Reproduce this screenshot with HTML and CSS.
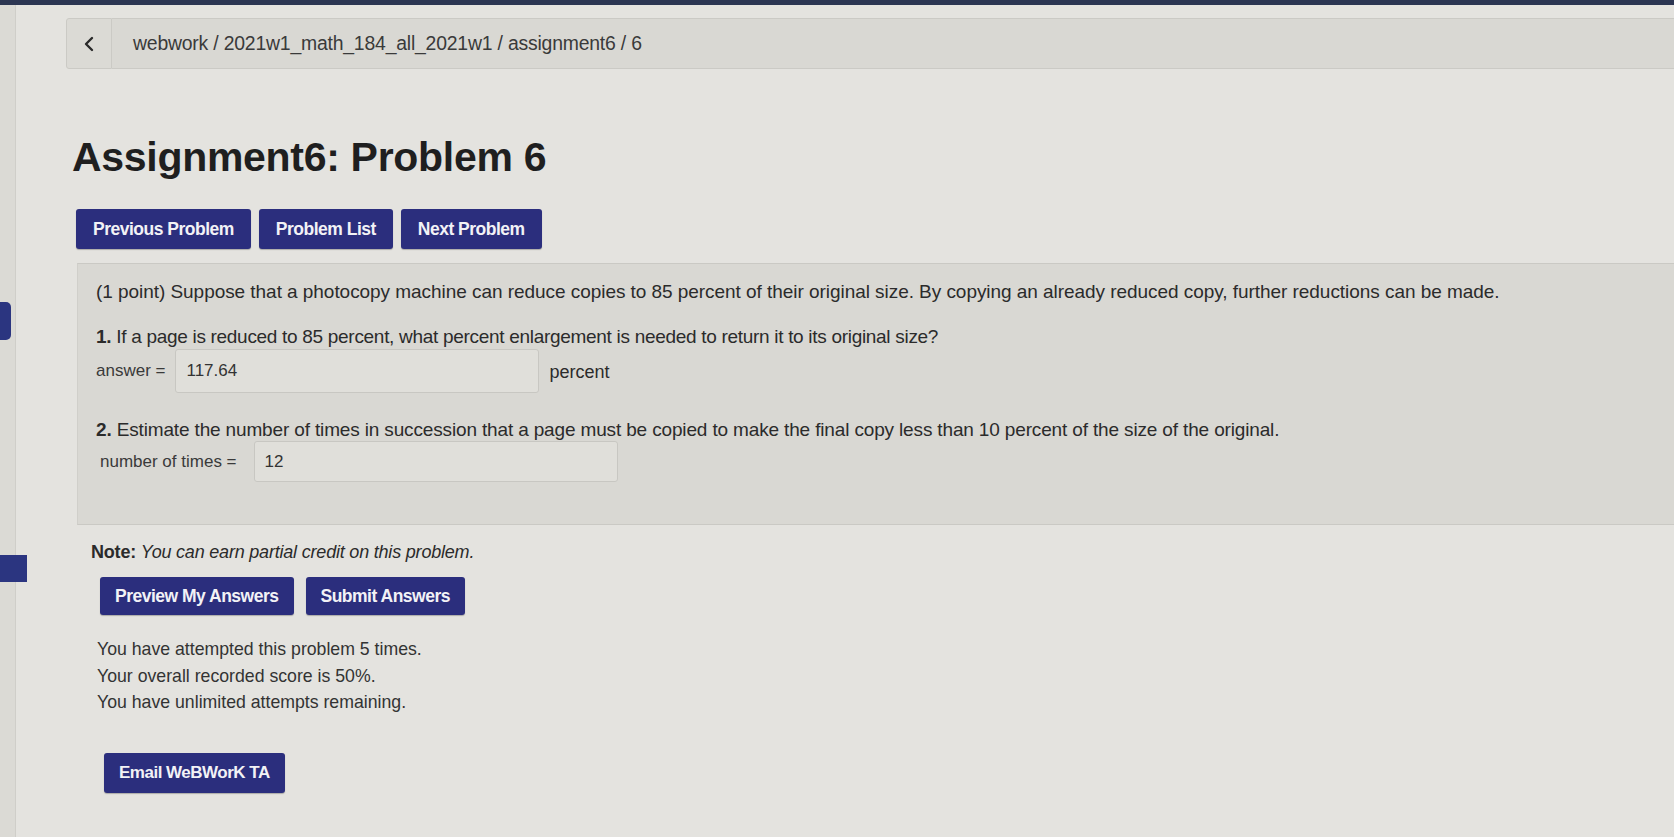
FILE: index.html
```html
<!DOCTYPE html>
<html>
<head>
<meta charset="utf-8">
<title>Assignment6: Problem 6</title>
<link rel="stylesheet" href="styles.css">
</head>
<body>
<div class="topbar"></div>
<div class="page">
  <aside class="sidebar">
    <div class="tab tab-a"></div>
    <div class="tab tab-b"></div>
  </aside>
  <main class="main">
    <nav class="crumbs">
      <div class="back">
        <svg width="12" height="16" viewBox="0 0 12 16"><path d="M9 2 L3 8 L9 14" fill="none" stroke="#2a2a2a" stroke-width="2.4" stroke-linecap="round" stroke-linejoin="round"/></svg>
      </div>
      <div class="crumb-bar">webwork / 2021w1_math_184_all_2021w1 / assignment6 / 6</div>
    </nav>
    <h1 class="title">Assignment6: Problem 6</h1>
    <div class="btnrow">
      <span class="btn">Previous Problem</span>
      <span class="btn">Problem List</span>
      <span class="btn">Next Problem</span>
    </div>
    <section class="problem">
      <p class="intro">(1 point) Suppose that a photocopy machine can reduce copies to 85 percent of their original size. By copying an already reduced copy, further reductions can be made.</p>
      <div class="part">
        <p class="q q1"><b>1.</b> If a page is reduced to 85 percent, what percent enlargement is needed to return it to its original size?</p>
        <div class="ansrow">
          <span class="lbl">answer =</span>
          <span class="inp">117.64</span>
          <span class="unit">percent</span>
        </div>
      </div>
      <div class="part part2">
        <p class="q q2"><b>2.</b> Estimate the number of times in succession that a page must be copied to make the final copy less than 10 percent of the size of the original.</p>
        <div class="ansrow">
          <span class="lbl">number of times =</span>
          <span class="inp inp2">12</span>
        </div>
      </div>
    </section>
    <p class="note"><b>Note:</b> <i>You can earn partial credit on this problem.</i></p>
    <div class="btnrow btnrow2">
      <span class="btn">Preview My Answers</span>
      <span class="btn">Submit Answers</span>
    </div>
    <div class="attempts">
      <p>You have attempted this problem 5 times.</p>
      <p>Your overall recorded score is 50%.</p>
      <p>You have unlimited attempts remaining.</p>
    </div>
    <span class="btn email">Email WeBWorK TA</span>
  </main>
</div>
</body>
</html>
```
FILE: styles.css
```css
html, body {
  margin: 0;
  padding: 0;
}
body {
  background: #e4e3df;
  font-family: "Liberation Sans", Arial, sans-serif;
  color: #2b2b2b;
  height: 837px;
  overflow: hidden;
}
.topbar {
  height: 5px;
  background: #2c3652;
}
.page {
  display: flex;
  height: 832px;
}
.sidebar {
  width: 15px;
  flex: 0 0 15px;
  background: #dbdad5;
  border-right: 1px solid #cfcec9;
  display: flex;
  flex-direction: column;
}
.tab {
  background: #2b3580;
}
.tab-a {
  width: 11px;
  height: 38px;
  margin-top: 297px;
  border-radius: 0 5px 5px 0;
}
.tab-b {
  width: 27px;
  height: 27px;
  margin-top: 215px;
}
.main {
  flex: 1;
  padding-left: 50px;
  padding-top: 13px;
}
.crumbs {
  display: flex;
  height: 51px;
}
.back {
  width: 44px;
  background: #dbdad5;
  border: 1px solid #cbcac5;
  border-radius: 3px 0 0 3px;
  display: flex;
  align-items: center;
  justify-content: center;
}
.crumb-bar {
  flex: 1;
  background: #d9d8d3;
  border-top: 1px solid #cbcac5;
  border-bottom: 1px solid #cbcac5;
  display: flex;
  align-items: center;
  padding-left: 21px;
  font-size: 19.4px;
  color: #3a3a3a;
  letter-spacing: -0.2px;
}
.title {
  margin: 64px 0 0 6px;
  font-size: 41px;
  font-weight: bold;
  letter-spacing: -0.3px;
  color: #1f1f1f;
  line-height: 48px;
}
.btnrow {
  display: flex;
  gap: 8px;
  margin: 28px 0 0 10px;
}
.btn {
  display: inline-block;
  background: #2b2e7d;
  color: #f2f2f6;
  font-weight: bold;
  font-size: 17.5px;
  letter-spacing: -0.5px;
  height: 40px;
  line-height: 40px;
  padding: 0 17px;
  border-radius: 3px;
  box-shadow: 0 1px 1px rgba(0,0,0,0.25);
}
.problem {
  margin: 14px 0 0 11px;
  background: #d9d8d3;
  border-top: 1px solid #cac9c4;
  border-bottom: 1px solid #cac9c4;
  border-left: 1px solid #d0cfca;
  height: 260px;
  padding: 0 0 0 18px;
}
.problem p {
  margin: 0;
}
.intro {
  font-size: 19px;
  letter-spacing: -0.05px;
  line-height: 24px;
  margin-top: 16px !important;
}
.part {
  margin-top: 21px;
}
.q {
  font-size: 19px;
  line-height: 24px;
}
.q1 {
  letter-spacing: -0.3px;
}
.q2 {
  letter-spacing: -0.15px;
  line-height: 22px;
}
.ansrow {
  display: flex;
  align-items: center;
}
.lbl {
  font-size: 17px;
  color: #3a3a3a;
  margin-right: 10px;
}
.inp {
  width: 352px;
  height: 42px;
  line-height: 42px;
  padding-left: 10px;
  background: #e0dfda;
  border: 1px solid #c8c7c2;
  border-radius: 3px;
  font-size: 17px;
  color: #333;
}
.unit {
  font-size: 18px;
  margin-left: 10px;
  margin-top: 3px;
}
.part2 {
  margin-top: 26px;
}
.part2 .lbl {
  margin-left: 4px;
  margin-right: 17px;
}
.inp2 {
  height: 39px;
  line-height: 39px;
}
.note {
  margin: 17px 0 0 25px;
  font-size: 18px;
  letter-spacing: -0.2px;
}
.btnrow2 {
  margin: 14px 0 0 34px;
  gap: 12px;
}
.btnrow2 .btn {
  height: 38px;
  line-height: 38px;
  padding: 0 15px;
}
.attempts {
  margin: 21px 0 0 31px;
  font-size: 17.7px;
  color: #333;
}
.attempts p {
  margin: 0;
  line-height: 26.5px;
}
.email {
  margin: 37px 0 0 38px;
  font-size: 17px;
  padding: 0 15px;
}
```
